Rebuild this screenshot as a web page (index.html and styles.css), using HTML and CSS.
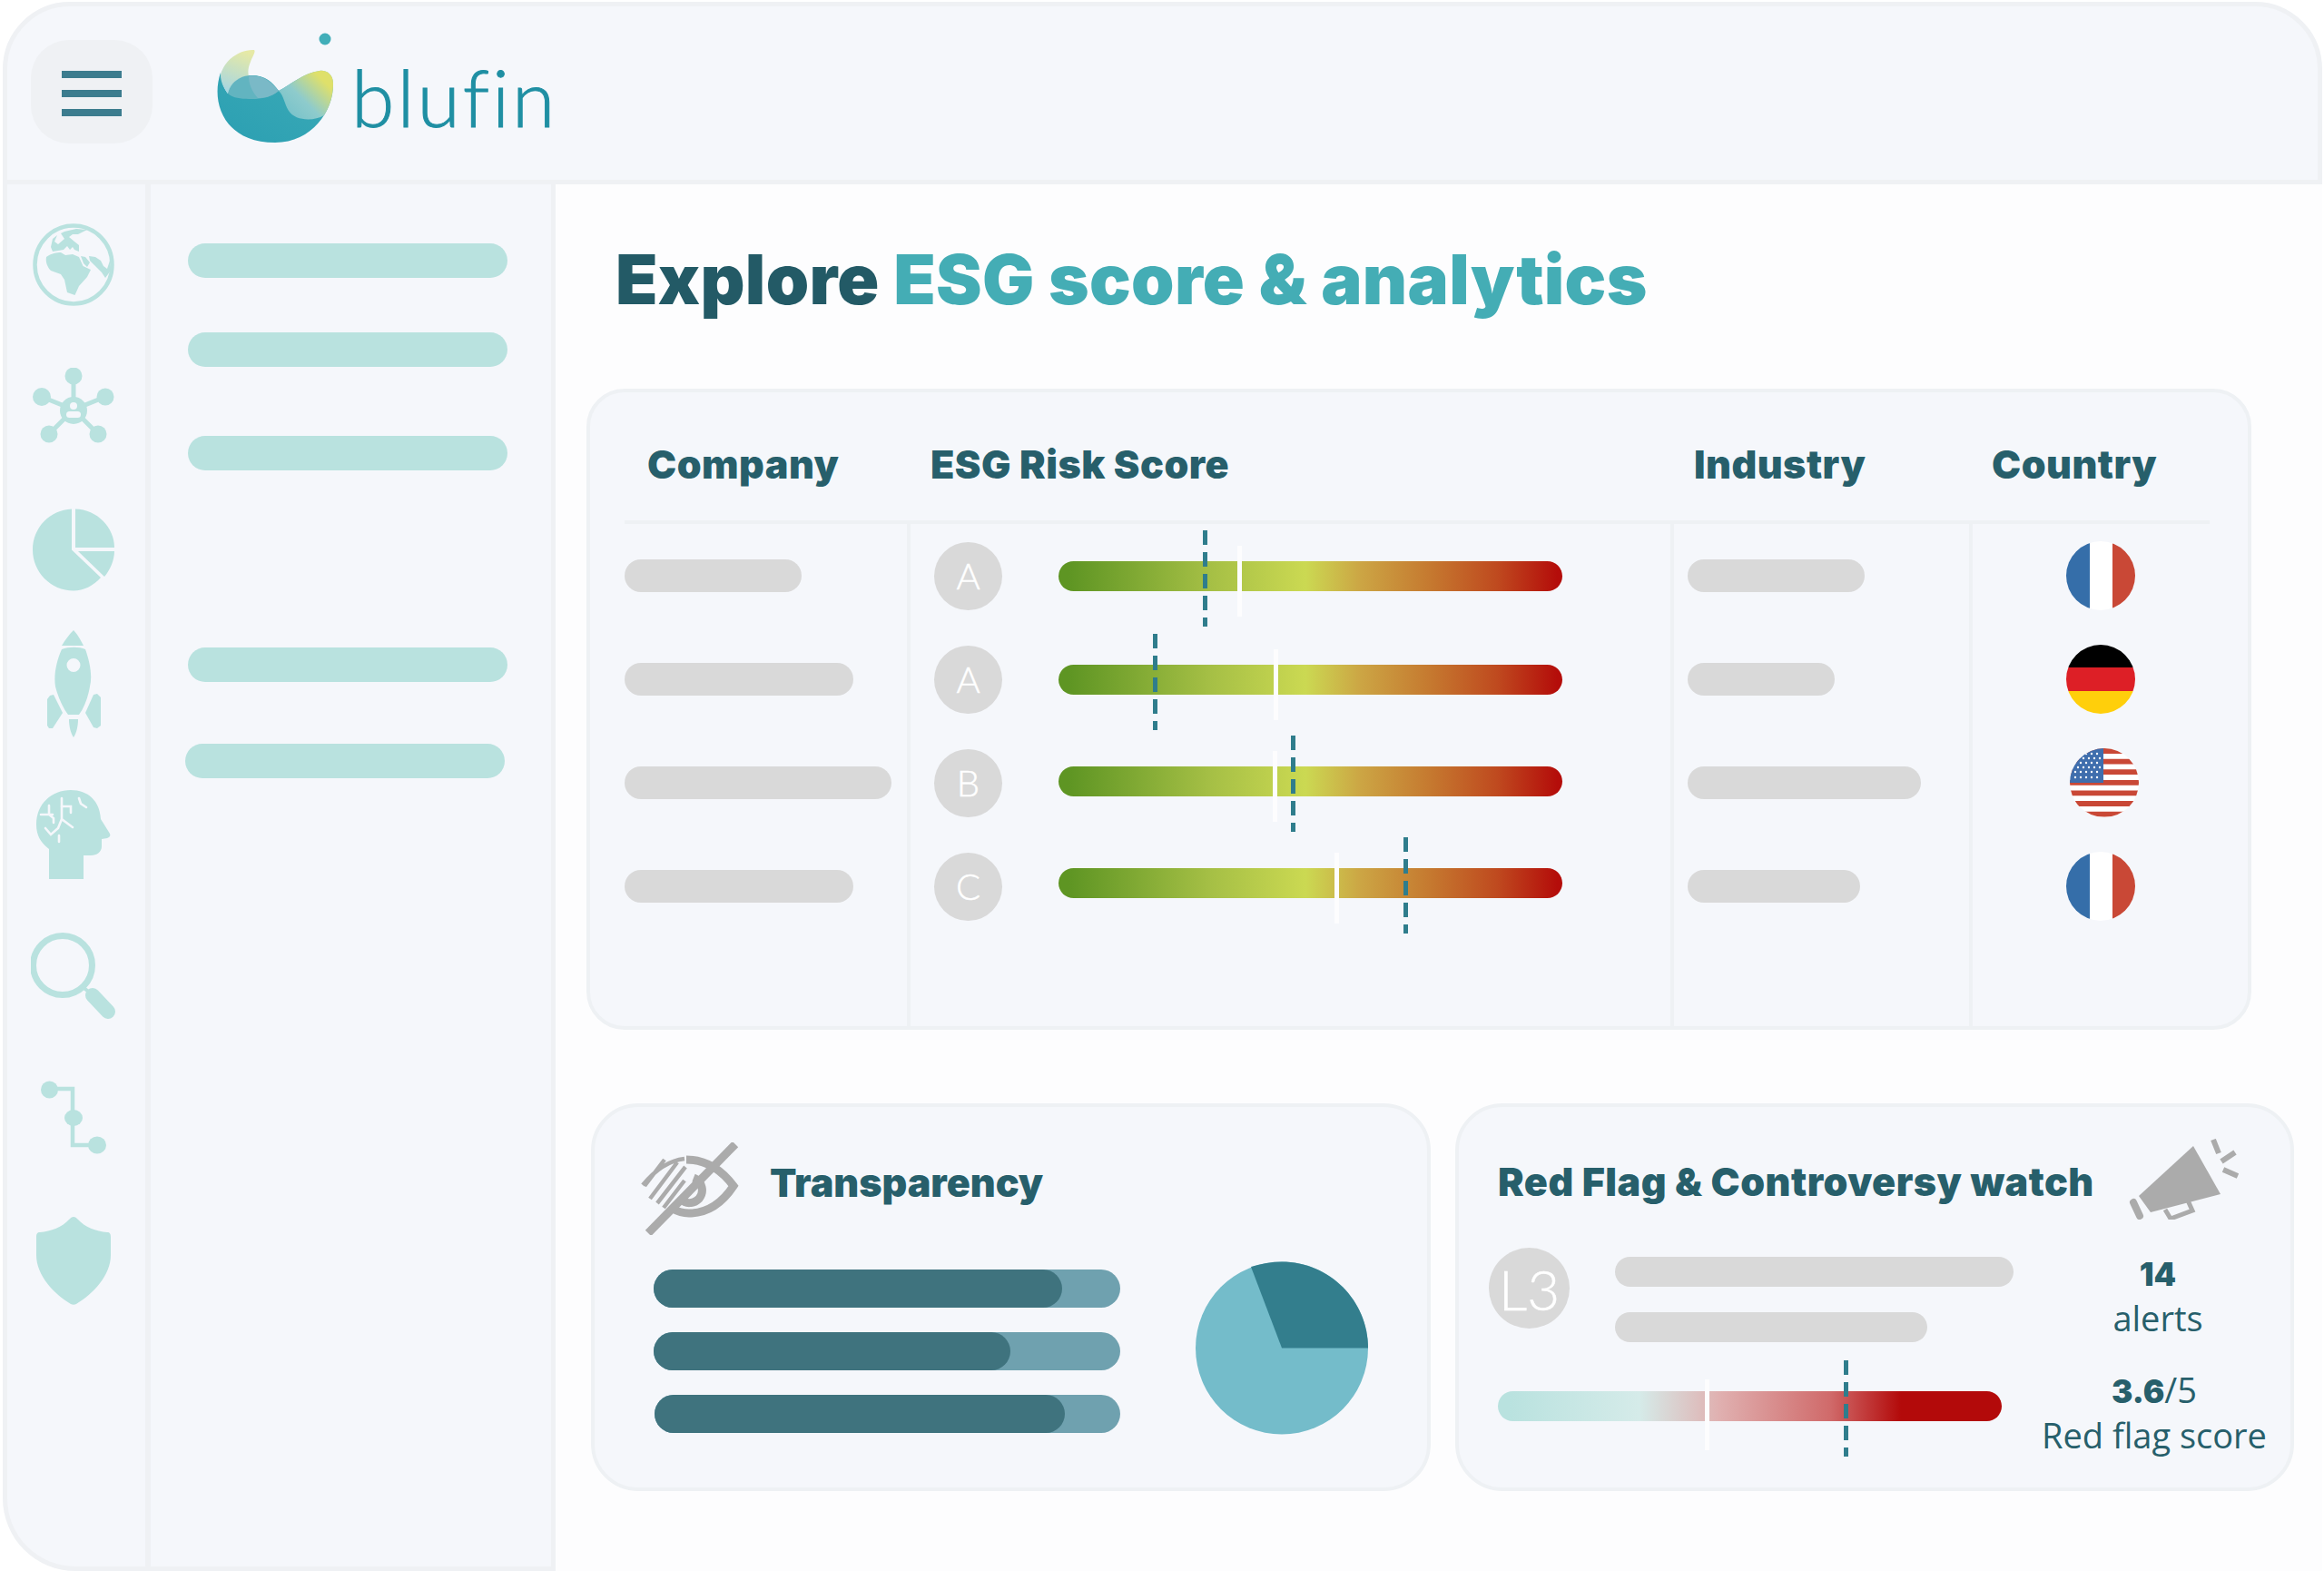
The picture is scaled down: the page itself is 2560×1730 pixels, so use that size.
FILE: index.html
```html
<!DOCTYPE html>
<html lang="en">
<head>
  <meta charset="UTF-8">
  <title>blufin - ESG score &amp; analytics</title>
  <link rel="stylesheet" href="styles.css">
</head>
<body>
  <div class="frame">
    <header class="topbar">
      <div class="menu-btn"><span></span><span></span><span></span></div>
      <div class="brand">
        <svg class="logo" viewBox="235 35 135 125">
          <defs>
            <linearGradient id="lg-body" x1="0" y1="1" x2="1" y2="0">
              <stop offset="0" stop-color="#2b9fb2"/><stop offset=".6" stop-color="#35a6b5"/><stop offset="1" stop-color="#8fc9c0"/>
            </linearGradient>
            <linearGradient id="lg-fin" x1="0.6" y1="0" x2="0.3" y2="1">
              <stop offset="0" stop-color="#e6e9a6"/><stop offset="1" stop-color="#a6d6e2"/>
            </linearGradient>
            <linearGradient id="lg-lobe" x1="0" y1="1" x2="1" y2="0.1">
              <stop offset="0" stop-color="#6fbfca"/><stop offset=".45" stop-color="#8ecbcc"/><stop offset=".85" stop-color="#dfe06a"/>
            </linearGradient>
          </defs>
          <path fill="url(#lg-body)" d="M243 80C232 112 246 157 303 157C345 157 368 120 367 92C367 82 360 77 352 78C335 80 320 93 307 100C300 90 292 83 277 83C265 83 255 92 251 103C247 98 244 90 243 80Z"/>
          <path fill="url(#lg-fin)" d="M243 82C248 65 265 54 280 55C282 57 278 62 276 68C273 75 273 80 274 84C262 84 255 92 251 103C246 96 243 90 243 82Z"/>
          <path fill="#62b4c0" d="M251 103C254 90 265 83 277 83C292 83 300 92 307 100C299 107 288 109 278 109C266 109 256 108 251 103Z"/>
          <path fill="#7ab9c7" d="M274 84C292 82 300 92 307 100C299 107 290 108 284 108C277 100 274 92 274 84Z"/>
          <path fill="url(#lg-lobe)" d="M307 100C320 93 335 80 352 78C360 77 367 82 367 92C367 105 363 118 357 127C345 134 325 133 318 122C313 114 313 106 307 100Z"/>
          <circle cx="358" cy="43" r="6.5" fill="#41aeb9"/>
        </svg>
        <span class="wordmark">blufin</span>
      </div>
    </header>

    <div class="layout">
      <nav class="rail">
        <svg class="ico ico-globe" viewBox="0 0 90 91">
          <ellipse cx="45" cy="45.5" rx="42.5" ry="43" fill="none" stroke="#b9e2df" stroke-width="4.5"/>
          <path fill="#b9e2df" d="M15 37C20 33 27 32 31 32L36 35L44 34L51 37L55.5 47L64 51L60 59L51 69L46.5 79L38 76L35 62L31 56L20 52C16 48 14 42 15 37Z"/>
          <path fill="#b9e2df" d="M22 17L27 13L24 20L28 23L35 17L31 11L35 9L48 6L60 7L50 12L44 12L40 15L46 20L51 24L51 31L46 29L44 26L41 29L38 25L34 29L22 31L20 26Z"/>
          <path fill="#b9e2df" d="M53 36L56 44L60 48L63 43L58 37ZM62 36L69 37L75 41L78 47L82 50L85 41L86 52L80 60L76 54L68 46L63 41Z"/>
        </svg>
        <svg class="ico ico-net" viewBox="0 0 90 85">
          <g fill="none" stroke="#b9e2df" stroke-width="5"><path d="M45 9V46M10 32L45 46L80 32M18 73L45 46L72 73"/></g>
          <g fill="#b9e2df"><circle cx="45" cy="9" r="9.5"/><circle cx="10" cy="32" r="10"/><circle cx="80" cy="32" r="9.5"/><circle cx="18" cy="73" r="9.5"/><circle cx="72" cy="73" r="9.5"/><circle cx="45" cy="47" r="15"/></g>
          <circle cx="45" cy="42" r="4" fill="#f5f7fb"/><rect x="37" y="48" width="16" height="7" rx="3.5" fill="#f5f7fb"/>
        </svg>
        <svg class="ico ico-pie" viewBox="0 0 90 91">
          <path fill="#b9e2df" d="M43 0.5V45.5L75 76C67 85 56 90.5 45 90.5C20 90.5 0 70 0 45.5C0 21 19 1.5 43 0.5Z"/>
          <path fill="#b9e2df" d="M47 0.5C71 1 90 21 90 43H47Z"/>
          <path fill="#b9e2df" d="M50 47H90C90 57 85 68 79 75Z"/>
        </svg>
        <svg class="ico ico-rocket" viewBox="0 0 59 118">
          <path fill="#b9e2df" d="M29 0C33 4 37 11 40 17H16C20 10 25 4 29 0Z"/>
          <path fill-rule="evenodd" fill="#b9e2df" d="M16 21C24 18 35 18 42 21C47 35 50 50 47 62C45 74 41 85 35 93H23C17 85 12 74 9 62C7 50 10 34 16 21ZM29 31A7.5 7.5 0 1 0 29 46A7.5 7.5 0 1 0 29 31Z"/>
          <path fill="#b9e2df" d="M3 72L7 71L17 91L6 108L2 108L0 105V76Z"/>
          <path fill="#b9e2df" d="M55 70L59 74V105L55 108L51 107L42 91L51 71Z"/>
          <path fill="#b9e2df" d="M24 98H34C34 106 32 114 29 118C26 114 24 106 24 98Z"/>
        </svg>
        <svg class="ico ico-head" viewBox="0 0 82 98">
          <path fill="#b9e2df" d="M14 98V65C5 58 0 50 0 38C0 15 17 0 38 0C57 0 70 12 71 32L81 48C82 50 81 52 78 53L72 54V62C72 68 67 72 60 72H52V98Z"/>
          <g fill="none" stroke="#f5f7fb" stroke-width="2.6" stroke-linecap="round">
            <path d="M5 27H18M14 17V27L19 31V36"/><path d="M28 9V32L40 41M28 32L24 42L16 49L10 42M25 50V57"/><path d="M28 18H38V25"/><path d="M47 9L49 15L55 19"/>
          </g>
        </svg>
        <svg class="ico ico-search" viewBox="0 0 94 96">
          <ellipse cx="35" cy="36" rx="32.5" ry="32.5" fill="none" stroke="#b9e2df" stroke-width="7"/>
          <path stroke="#b9e2df" stroke-width="4" d="M57 60L65 66"/>
          <path stroke="#b9e2df" stroke-width="16" stroke-linecap="round" d="M68 69L85 87"/>
        </svg>
        <svg class="ico ico-tree" viewBox="0 0 72 81">
          <path fill="none" stroke="#b9e2df" stroke-width="4.5" d="M10 9H35V71H62"/>
          <g fill="#b9e2df"><ellipse cx="9.5" cy="10" rx="9.5" ry="9.5"/><ellipse cx="36" cy="41" rx="10" ry="9"/><ellipse cx="62" cy="71" rx="10" ry="9.5"/></g>
        </svg>
        <svg class="ico ico-shield" viewBox="0 0 82 97">
          <path fill="#b9e2df" d="M41 0C43 0 44 1 46 3C53 11 66 16 78 17C81 17 82 19 82 22V42C82 65 62 85 44 96C42 97 40 97 38 96C20 85 0 65 0 42V22C0 19 1 17 4 17C16 16 29 11 36 3C38 1 39 0 41 0Z"/>
        </svg>
      </nav>

      <aside class="menu">
        <div class="pill"></div>
        <div class="pill pill-wide-gap"></div>
        <div class="pill pill-section"></div>
        <div class="pill pill-gap"></div>
        <div class="pill pill-last"></div>
      </aside>

      <main class="content">
        <h1 class="title">Explore <span class="accent">ESG score &amp; analytics</span></h1>

        <section class="scores">
          <div class="scores-head">
            <div class="h-company">Company</div>
            <div class="h-esg">ESG Risk Score</div>
            <div class="h-industry">Industry</div>
            <div class="h-country">Country</div>
          </div>

          <div class="row">
            <div class="cell"><div class="bar" style="width:195px"></div></div>
            <div class="cell cell-score">
              <div class="grade">A</div>
              <div class="track track-r1">
                <i class="mark" style="left:197px"></i><i class="dash" style="left:159px"></i>
              </div>
            </div>
            <div class="cell cell-ind"><div class="bar" style="width:195px"></div></div>
            <div class="cell cell-flag">
              <svg class="flag" viewBox="0 0 76 76"><defs><clipPath id="fc"><circle cx="38" cy="38" r="38"/></clipPath></defs><g clip-path="url(#fc)"><rect width="26" height="76" fill="#356ea9"/><rect x="26" width="25" height="76" fill="#fff"/><rect x="51" width="25" height="76" fill="#c94836"/></g></svg>
            </div>
          </div>

          <div class="row">
            <div class="cell"><div class="bar" style="width:252px"></div></div>
            <div class="cell cell-score">
              <div class="grade">A</div>
              <div class="track">
                <i class="mark" style="left:237px"></i><i class="dash" style="left:104px"></i>
              </div>
            </div>
            <div class="cell cell-ind"><div class="bar" style="width:162px"></div></div>
            <div class="cell cell-flag">
              <svg class="flag" viewBox="0 0 76 76"><g clip-path="url(#fc)"><rect width="76" height="25" fill="#000"/><rect y="25" width="76" height="26" fill="#dd1f26"/><rect y="51" width="76" height="25" fill="#ffcf0b"/></g></svg>
            </div>
          </div>

          <div class="row">
            <div class="cell"><div class="bar" style="width:294px"></div></div>
            <div class="cell cell-score">
              <div class="grade grade-b">B</div>
              <div class="track track-r3">
                <i class="mark" style="left:236px"></i><i class="dash" style="left:256px"></i>
              </div>
            </div>
            <div class="cell cell-ind"><div class="bar" style="width:257px"></div></div>
            <div class="cell cell-flag">
              <svg class="flag flag-us" viewBox="0 0 76 76">
                <g clip-path="url(#fc)">
                  <rect width="76" height="76" fill="#fff"/>
                  <path stroke="#c94836" stroke-width="5.8" d="M0 3H76M0 14.6H76M0 26.2H76M0 37.8H76M0 49.4H76M0 61H76M0 72.6H76"/>
                  <rect width="37" height="38" fill="#3f6ead"/>
                  <g fill="#fff">
                    <circle cx="6" cy="26" r="1.2"/><circle cx="12" cy="26" r="1.2"/><circle cx="18" cy="26" r="1.2"/><circle cx="24" cy="26" r="1.2"/><circle cx="30" cy="26" r="1.2"/>
                    <circle cx="9" cy="21" r="1.2"/><circle cx="15" cy="21" r="1.2"/><circle cx="21" cy="21" r="1.2"/><circle cx="27" cy="21" r="1.2"/><circle cx="33" cy="21" r="1.2"/>
                    <circle cx="6" cy="16" r="1.2"/><circle cx="12" cy="16" r="1.2"/><circle cx="18" cy="16" r="1.2"/><circle cx="24" cy="16" r="1.2"/><circle cx="30" cy="16" r="1.2"/>
                    <circle cx="9" cy="11" r="1.2"/><circle cx="15" cy="11" r="1.2"/><circle cx="21" cy="11" r="1.2"/><circle cx="27" cy="11" r="1.2"/><circle cx="33" cy="11" r="1.2"/>
                    <circle cx="18" cy="6" r="1.2"/><circle cx="24" cy="6" r="1.2"/><circle cx="30" cy="6" r="1.2"/>
                    <circle cx="6" cy="32" r="1.2"/><circle cx="12" cy="32" r="1.2"/><circle cx="18" cy="32" r="1.2"/><circle cx="24" cy="32" r="1.2"/><circle cx="30" cy="32" r="1.2"/>
                  </g>
                </g>
              </svg>
            </div>
          </div>

          <div class="row">
            <div class="cell"><div class="bar" style="width:252px"></div></div>
            <div class="cell cell-score">
              <div class="grade">C</div>
              <div class="track track-r4">
                <i class="mark" style="left:304px"></i><i class="dash" style="left:380px"></i>
              </div>
            </div>
            <div class="cell cell-ind"><div class="bar" style="width:190px"></div></div>
            <div class="cell cell-flag">
              <svg class="flag" viewBox="0 0 76 76"><g clip-path="url(#fc)"><rect width="26" height="76" fill="#356ea9"/><rect x="26" width="25" height="76" fill="#fff"/><rect x="51" width="25" height="76" fill="#c94836"/></g></svg>
            </div>
          </div>

          <div class="row row-fill">
            <div class="cell"></div><div class="cell cell-score"></div><div class="cell cell-ind"></div><div class="cell cell-flag"></div>
          </div>
        </section>

        <div class="cards">
          <section class="card card-transparency">
            <div class="card-head">
              <svg class="eye" viewBox="0 0 110 102">
                <g fill="none" stroke="#ababab">
                  <path stroke-width="9" d="M52 19C76 19 92 32 104 48C92 66 76 78 55 78C48 78 42 76 37 73"/>
                  <path stroke-width="9" d="M60 39C70 43 72 55 66 62C60 68 51 68 47 63"/>
                  <path stroke-width="4.5" d="M4 47C18 30 32 20 50 18M12 62L42 22M20 67L51 27M27 72L50 42M6 48L28 19"/>
                  <path stroke-width="9" d="M106 2L10 100"/>
                </g>
              </svg>
              <h2 class="card-title card-title-tr">Transparency</h2>
            </div>
            <div class="tr-body">
              <div class="tr-bars">
                <div class="tr-bar"><div class="tr-fill" style="width:450px"></div></div>
                <div class="tr-bar tr-bar-2"><div class="tr-fill" style="width:393px"></div></div>
                <div class="tr-bar tr-bar-3"><div class="tr-fill" style="width:452px"></div></div>
              </div>
              <svg class="tr-pie" viewBox="0 0 190 191">
                <circle cx="95" cy="95.5" r="95" fill="#74bcca"/>
                <path fill="#337e8d" d="M95 95.5H190C190 43 147 0.5 95 0.5C84 0.5 72 2.5 61 6Z"/>
              </svg>
            </div>
          </section>

          <section class="card card-flags">
            <div class="flags-head">
              <h2 class="card-title card-title-flags">Red Flag &amp; Controversy watch</h2>
              <svg class="horn" viewBox="0 0 121 89">
                <path fill="#ababab" d="M71 8L101 61L24 81L11 63Z"/>
                <path stroke="#ababab" stroke-width="8" stroke-linecap="round" d="M5 70L12 85"/>
                <path fill="none" stroke="#ababab" stroke-width="5" d="M40 78L46 88L70 79L65 68"/>
                <path stroke="#ababab" stroke-width="6" d="M93 1L99 16M117 15L102 25M120 41L104 34"/>
              </svg>
            </div>
            <div class="flags-mid">
              <div class="level">L3</div>
              <div class="flags-lines">
                <div class="bar bar-lg" style="width:439px"></div>
                <div class="bar bar-lg" style="width:344px"></div>
              </div>
              <div class="stat stat-alerts"><b>14</b><span>alerts</span></div>
            </div>
            <div class="flags-low">
              <div class="track track-red">
                <i class="mark" style="left:228px"></i><i class="dash" style="left:381px"></i>
              </div>
              <div class="stat stat-score"><div><b>3.6</b>/5</div><span>Red flag score</span></div>
            </div>
          </section>
        </div>
      </main>
    </div>
  </div>
</body>
</html>
```

FILE: styles.css
```css
* {
  box-sizing: border-box;
}

html, body {
  margin: 0;
  height: 100%;
  background: #fff;
}

body {
  padding: 2px 2px 0 3px;
  font-family: Inter, "Liberation Sans", sans-serif;
  color: #275f6b;
  overflow: hidden;
}

.frame {
  height: 1728px;
  display: flex;
  flex-direction: column;
}

/* top bar */
.topbar {
  flex: none;
  height: 201px;
  display: flex;
  padding: 37px 0 0 26px;
  border: 5px solid #eff1f4;
  border-radius: 74px 74px 0 0;
  background: #f5f7fb;
}

.menu-btn {
  width: 134px;
  height: 114px;
  padding: 34px 34px 0;
  border-radius: 42px;
  background: #eff1f4;
  display: flex;
  flex-direction: column;
  gap: 13px;
}

.menu-btn span {
  height: 8px;
  background: #3c7c8e;
}

.brand {
  display: flex;
  align-items: flex-start;
  margin-left: 67px;
}

.logo {
  width: 135px;
  height: 125px;
  margin-top: -9px;
}

.wordmark {
  margin: 13px 0 0 17px;
  font-family: Lato, sans-serif;
  font-weight: 300;
  font-size: 86px;
  line-height: 100px;
  letter-spacing: 3px;
  -webkit-text-stroke: 1px #1f8fa3;
  color: #1f8fa3;
}

.layout {
  flex: 1;
  display: flex;
  min-height: 0;
}

/* icon rail */
.rail {
  flex: none;
  width: 163px;
  padding-top: 43px;
  border-left: 5px solid #eff1f4;
  border-bottom: 5px solid #eff1f4;
  border-right: 6px solid #eff1f4;
  border-radius: 0 0 0 80px;
  background: #f5f7fb;
  display: flex;
  flex-direction: column;
}

.ico {
  display: block;
  flex: none;
}

.ico-globe { width: 90px; height: 91px; margin-left: 28px; }
.ico-net { width: 90px; height: 85px; margin: 68px 0 0 28px; }
.ico-pie { width: 90px; height: 91px; margin: 70px 0 0 28px; }
.ico-rocket { width: 59px; height: 118px; margin: 43px 0 0 44px; }
.ico-head { width: 82px; height: 98px; margin: 58px 0 0 32px; }
.ico-search { width: 94px; height: 96px; margin: 59px 0 0 26px; }
.ico-tree { width: 72px; height: 81px; margin: 67px 0 0 37px; }
.ico-shield { width: 82px; height: 97px; margin: 69px 0 0 32px; }

/* second column */
.menu {
  flex: none;
  width: 446px;
  padding: 65px 0 0 41px;
  border-right: 5px solid #eff1f4;
  border-bottom: 5px solid #eff1f4;
  background: #f5f7fb;
  display: flex;
  flex-direction: column;
}

.pill {
  width: 352px;
  height: 38px;
  margin-bottom: 60px;
  border-radius: 19px;
  background: #b9e2df;
}

.pill-wide-gap {
  margin-bottom: 76px;
}

.pill-section {
  margin-bottom: 195px;
}

.pill-gap {
  margin-bottom: 68px;
}

.pill-last {
  margin-left: -3px;
}

/* main panel */
.content {
  flex: 1;
  min-width: 0;
  padding-top: 59px;
  background: #fdfdfe;
}

.title {
  margin: 0 0 0 66px;
  font-size: 76px;
  line-height: 90px;
  font-weight: 900;
  letter-spacing: 0.3px;
  color: #235a66;
}

.accent {
  color: #44adb5;
}

/* score table */
.scores {
  width: 1834px;
  height: 706px;
  margin: 76px 0 0 34px;
  border: 4px solid #eef1f4;
  border-radius: 42px;
  background: #f5f7fb;
  display: flex;
  flex-direction: column;
}

.scores-head {
  flex: none;
  height: 145px;
  margin: 0 42px 0 38px;
  padding-top: 54px;
  display: grid;
  grid-template-columns: 337px 841px 328px 1fr;
  border-bottom: 4px solid #eef1f4;
  font-size: 43px;
  line-height: 50px;
  font-weight: 900;
  letter-spacing: 0.5px;
}

.h-company { padding-left: 25px; }

.row {
  flex: none;
  height: 114px;
  margin-left: 38px;
  display: grid;
  grid-template-columns: 311px 841px 329px 1fr;
}

.row-fill {
  flex: 1;
}

.cell {
  display: flex;
  align-items: center;
}

.cell-score,
.cell-ind,
.cell-flag {
  border-left: 4px solid #eef1f4;
}

.cell-score {
  padding-left: 26px;
  gap: 62px;
}

.cell-ind {
  padding-left: 15px;
}

.cell-flag {
  padding-left: 103px;
}

.bar {
  height: 36px;
  border-radius: 18px;
  background: #d9d9d9;
}

.grade,
.level {
  flex: none;
  display: flex;
  align-items: center;
  justify-content: center;
  border-radius: 50%;
  background: #d9d9d9;
  color: #fff;
  font-family: Lato, sans-serif;
  font-weight: 300;
  -webkit-text-stroke: 0.5px #fff;
}

.grade {
  width: 75px;
  height: 75px;
  font-size: 40px;
}

.track {
  position: relative;
  flex: none;
  width: 555px;
  height: 33px;
  border-radius: 17px;
  background: linear-gradient(90deg, #5e9523 2%, #a5bf45 30%, #cbd952 49%, #cca544 60%, #c5782f 74%, #bf4a1f 87%, #b40d0a 99%);
}

.track-r3 { margin-bottom: 4px; }
.track-r4 { margin-bottom: 7px; }

.mark {
  position: absolute;
  top: -17px;
  width: 5px;
  height: 78px;
  background: #fdfdfe;
}

.dash {
  position: absolute;
  top: -34px;
  width: 5px;
  height: 106px;
  background: repeating-linear-gradient(180deg, #2f7d8c 0 16px, transparent 16px 24px);
}

.flag {
  width: 76px;
  height: 76px;
  display: block;
}

.flag-us {
  margin-left: 4px;
}

/* bottom cards */
.cards {
  display: flex;
  margin: 81px 0 0 39px;
  gap: 27px;
}

.card {
  height: 427px;
  border: 4px solid #eef1f4;
  border-radius: 52px;
  background: #f5f7fb;
}

.card-transparency {
  width: 925px;
  padding: 39px 0 0 49px;
}

.card-flags {
  width: 924px;
  padding: 0 0 0 43px;
}

.card-head {
  display: flex;
  align-items: center;
  gap: 34px;
}

.eye {
  width: 110px;
  height: 102px;
  flex: none;
}

.card-title {
  margin: 0;
  font-size: 43px;
  line-height: 50px;
  font-weight: 900;
  letter-spacing: 0.5px;
}

.card-title-tr {
  margin-bottom: 15px;
  letter-spacing: 0;
}

.tr-body {
  display: flex;
  margin: 29px 0 0 16px;
  align-items: flex-start;
}

.tr-bars {
  width: 514px;
  padding-top: 9px;
  display: flex;
  flex-direction: column;
  gap: 27px;
}

.tr-bar {
  height: 42px;
  border-radius: 21px;
  background: #6fa1af;
}

.tr-bar-3 {
  margin-left: 1px;
}

.tr-fill {
  height: 100%;
  border-radius: 21px;
  background: #3f737e;
}

.tr-pie {
  width: 190px;
  height: 191px;
  margin-left: 83px;
  flex: none;
}

.flags-head {
  display: flex;
  align-items: flex-start;
}

.card-title-flags {
  flex: none;
  width: 658px;
  margin-top: 57px;
  white-space: nowrap;
}

.horn {
  width: 121px;
  height: 89px;
  margin: 35px 0 0 37px;
  flex: none;
}

.flags-mid {
  display: flex;
  align-items: flex-start;
  margin: 31px 0 0 -10px;
}

.level {
  width: 89px;
  height: 89px;
  font-size: 62px;
}

.flags-lines {
  width: 441px;
  margin: 10px 0 0 50px;
  display: flex;
  flex-direction: column;
  gap: 28px;
}

.bar-lg {
  height: 33px;
}

.stat {
  text-align: center;
  font-family: "Open Sans", sans-serif;
  font-size: 38px;
  line-height: 48px;
}

.stat b {
  font-family: Inter, sans-serif;
  font-weight: 900;
  font-size: 35px;
}

.stat span {
  display: block;
}

.stat-alerts {
  width: 160px;
  margin: 3px 0 0 77px;
}

.flags-low {
  display: flex;
  margin-top: 54px;
}

.track-red {
  background: linear-gradient(90deg, #b9e2df 2%, #d5ebe9 28%, #e0b0b0 44%, #d06a6a 66%, #b30a0a 80%);
}

.track-red .mark {
  top: -13px;
}

.stat-score {
  width: 288px;
  margin: -26px 0 0 24px;
}
```
